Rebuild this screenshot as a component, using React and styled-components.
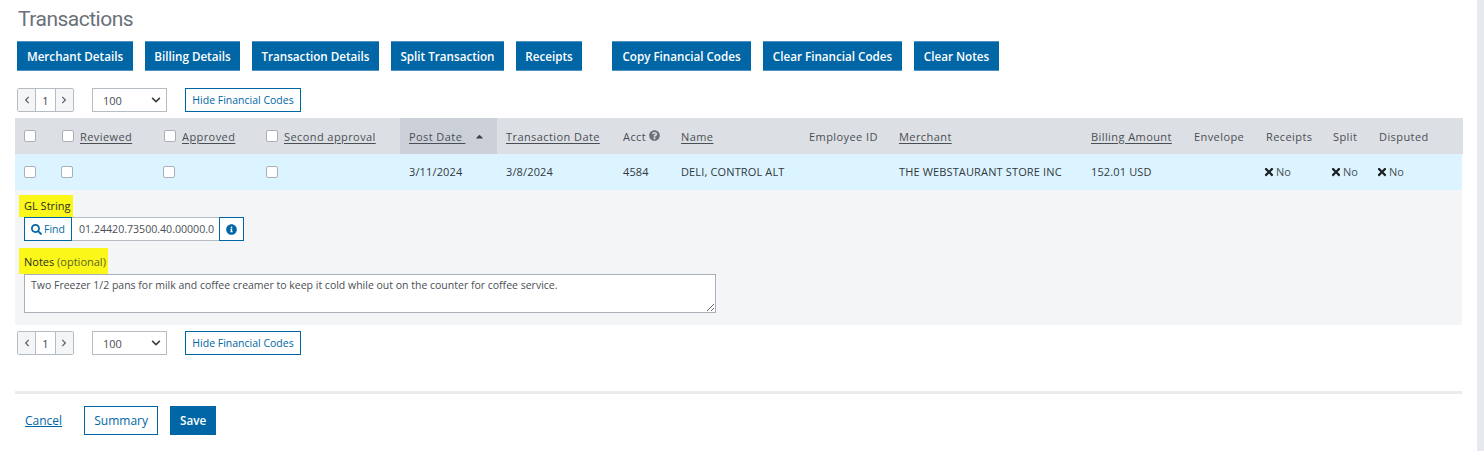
import React from "react";
import styled, { createGlobalStyle, css } from "styled-components";
import { FaCaretUp, FaChevronDown, FaChevronLeft, FaChevronRight, FaInfoCircle, FaQuestionCircle, FaSearch, FaTimes } from "react-icons/fa";

const GlobalStyle = createGlobalStyle`
  html, body {
    margin: 0;
    padding: 0;
    background: #fff;
    height: 451px;
    overflow: hidden;
  }
  body {
    font-family: "Open Sans", "Liberation Sans", sans-serif;
    font-size: 11px;
    color: #3a3f45;
  }
`;

const Page = styled.div`
  position: relative;
  width: 1484px;
  height: 451px;
  box-sizing: border-box;
  padding: 0 22px 0 15px;
`;

const Title = styled.h1`
  margin: 0;
  padding: 6px 0 0 3px;
  height: 41px;
  box-sizing: border-box;
  font-family: Roboto, sans-serif;
  font-size: 21px;
  line-height: 26px;
  font-weight: 400;
  letter-spacing: -0.5px;
  color: #6b7178;
`;

const Toolbar = styled.div`
  display: flex;
  gap: 12px;
  padding-left: 2px;
`;

const ActionGap = styled.div`
  width: 6px;
`;

const ActionButton = styled.button`
  height: 30px;
  width: ${({ $w }) => $w}px;
  padding: 0;
  border: 0;
  border-top: 1px solid #4d92c0;
  border-bottom: 1px solid #4d92c0;
  background: #0066a6;
  color: #fff;
  font-family: "Open Sans", sans-serif;
  font-size: 11.65px;
  font-weight: 600;
  white-space: nowrap;
`;

const Pager = styled.div`
  display: flex;
  align-items: center;
  padding-left: 2px;
  margin-top: ${({ $top }) => $top}px;
`;

const PagerBox = styled.div`
  display: flex;
  width: 57px;
  height: 24px;
  box-sizing: border-box;
  border: 1px solid #b5bcc3;
  border-radius: 2px;
`;

const PagerArrow = styled.div`
  width: 18px;
  display: flex;
  align-items: center;
  justify-content: center;
  background: #f4f5f7;
  color: #5b6168;
  font-size: 8px;
`;

const PagerNum = styled.div`
  width: 19px;
  display: flex;
  align-items: center;
  justify-content: center;
  border-left: 1px solid #b5bcc3;
  border-right: 1px solid #b5bcc3;
  color: #3a3f45;
  font-size: 11px;
`;

const PageSize = styled.div`
  width: 75px;
  height: 24px;
  margin-left: 18px;
  box-sizing: border-box;
  border: 1px solid #b5bcc3;
  display: flex;
  align-items: center;
  justify-content: space-between;
  padding: 0 5px 0 10px;
  font-size: 11px;
  color: #4a4f55;
  svg {
    font-size: 10px;
    color: #3a3f45;
  }
`;

const OutlineButton = styled.button`
  height: ${({ $large }) => ($large ? 29 : 24)}px;
  width: ${({ $w }) => $w}px;
  margin-left: ${({ $left }) => $left || 0}px;
  padding: 0;
  border: 1px solid #0066a6;
  background: #fff;
  color: #0066a6;
  font-family: "Open Sans", sans-serif;
  font-size: ${({ $large }) => ($large ? 12 : 10.5)}px;
`;

const Table = styled.div`
  margin-top: 6px;
  width: 1447px;
`;

const Row = styled.div`
  display: grid;
  grid-template-columns: 38px 102px 102px 143px 97px 117px 58px 128px 90px 192px 103px 72px 67px 46px 92px;
  height: 36px;
  align-items: center;
  background: ${({ $bg }) => $bg};
  margin-right: ${({ $bleed }) => ($bleed ? -1 : 0)}px;
`;

const Cell = styled.div`
  display: flex;
  align-items: center;
  height: 100%;
  padding-left: 9px;
  box-sizing: border-box;
  white-space: nowrap;
  ${({ $sorted }) =>
    $sorted &&
    css`
      background: #ccd1d9;
    `}
`;

const HeadText = styled.span`
  font-size: 11px;
  letter-spacing: 0.42px;
  white-space: pre;
  color: #4a4f55;
  ${({ $link }) =>
    $link &&
    css`
      text-decoration: underline;
      text-underline-offset: 2px;
    `}
`;

const BodyText = styled.span`
  font-size: 11px;
  letter-spacing: 0.14px;
  margin-top: -1px;
  color: #33383e;
`;

const Check = styled.span`
  display: inline-block;
  flex: none;
  width: 12px;
  height: 12px;
  box-sizing: border-box;
  background: #fff;
  border: 1px solid #a9b0b7;
  border-radius: 2px;
  margin-left: ${({ $left }) => $left || 0}px;
  margin-right: ${({ $right }) => $right || 0}px;
`;

const SortIcon = styled(FaCaretUp)`
  font-size: 11px;
  margin-left: 8px;
  color: #3a3f45;
`;

const HelpIcon = styled(FaQuestionCircle)`
  font-size: 11px;
  margin: -2px 0 0 3px;
  color: #6b7178;
`;

const NoFlag = styled.span`
  display: inline-flex;
  align-items: center;
  gap: 1px;
  margin-left: -3px;
  font-size: 11px;
  line-height: 14px;
  color: #4a4f55;
  svg {
    font-size: 12px;
    color: #1d2024;
  }
`;

const Detail = styled.div`
  height: 135px;
  background: #f4f5f7;
  box-sizing: border-box;
  padding: 5px 0 0 9px;
`;

const Marked = styled.label`
  display: block;
  width: fit-content;
  margin-left: -5px;
  padding: 0 2px 0 5px;
  height: ${({ $h }) => $h}px;
  line-height: ${({ $line }) => $line}px;
  background: #fbf719;
  font-size: 11px;
  color: #2b2e22;
`;

const Optional = styled.span`
  color: #5c6420;
`;

const CodeField = styled.div`
  display: flex;
  height: 24px;
`;

const FindButton = styled.button`
  width: 48px;
  padding: 0;
  border: 1px solid #0066a6;
  background: #fff;
  color: #0066a6;
  font-family: "Open Sans", sans-serif;
  font-size: 10.5px;
  display: flex;
  align-items: center;
  justify-content: center;
  gap: 2px;
  svg {
    font-size: 11px;
  }
`;

const CodeValue = styled.div`
  width: 147px;
  box-sizing: border-box;
  padding-left: 7px;
  background: #fff;
  border-top: 1px solid #b5bcc3;
  border-bottom: 1px solid #b5bcc3;
  line-height: 22px;
  font-size: 10.6px;
  color: #4a4f55;
  white-space: nowrap;
  overflow: hidden;
`;

const InfoButton = styled.button`
  width: 25px;
  padding: 0;
  border: 1px solid #0066a6;
  background: #fff;
  color: #0066a6;
  display: flex;
  align-items: center;
  justify-content: center;
  font-size: 11px;
`;

const NotesBlock = styled.div`
  margin-top: 7px;
`;

const NotesBox = styled.textarea`
  display: block;
  width: 692px;
  height: 39px;
  box-sizing: border-box;
  padding: 3px 6px;
  border: 1px solid #a9b0b7;
  border-radius: 0;
  outline: none;
  font-family: "Open Sans", sans-serif;
  font-size: 10.5px;
  line-height: 14px;
  color: #4a4f55;
`;

const Divider = styled.div`
  width: 1447px;
  height: 3px;
  margin-top: 36px;
  background: #e9ebed;
`;

const Footer = styled.div`
  display: flex;
  align-items: center;
  margin-top: 12px;
  padding-left: 10px;
`;

const CancelLink = styled.a`
  font-size: 12px;
  color: #0066a6;
  text-decoration: underline;
  margin-right: 22px;
`;

const SaveButton = styled.button`
  width: 46px;
  height: 29px;
  margin-left: 12px;
  padding: 0;
  border: 0;
  background: #0066a6;
  color: #fff;
  font-family: "Open Sans", sans-serif;
  font-size: 11.65px;
  font-weight: 600;
`;

const Scrollbar = styled.div`
  position: absolute;
  top: 0;
  right: 0;
  width: 7px;
  height: 451px;
  background: #e6eaee;
`;

const actions = [
  ["Merchant Details", 116],
  ["Billing Details", 95],
  ["Transaction Details", 127],
  ["Split Transaction", 113],
  ["Receipts", 66],
];

const codeActions = [
  ["Copy Financial Codes", 139],
  ["Clear Financial Codes", 139],
  ["Clear Notes", 85],
];

const Pagination = ({ top }) => (
  <Pager $top={top}>
    <PagerBox>
      <PagerArrow><FaChevronLeft /></PagerArrow>
      <PagerNum>1</PagerNum>
      <PagerArrow><FaChevronRight /></PagerArrow>
    </PagerBox>
    <PageSize>100<FaChevronDown /></PageSize>
    <OutlineButton $w={116} $left={18}>Hide Financial Codes</OutlineButton>
  </Pager>
);

export default function App() {
  return (
    <Page>
      <GlobalStyle />
      <Title>Transactions</Title>
      <Toolbar>
        {actions.map(([label, w]) => (
          <ActionButton key={label} $w={w}>{label}</ActionButton>
        ))}
        <ActionGap />
        {codeActions.map(([label, w]) => (
          <ActionButton key={label} $w={w}>{label}</ActionButton>
        ))}
      </Toolbar>
      <Pagination top={17} />
      <Table>
        <Row $bg="#dcdfe3" $bleed>
          <Cell><Check /></Cell>
          <Cell><Check $right={6} /><HeadText $link>Reviewed</HeadText></Cell>
          <Cell><Check $right={6} /><HeadText $link>Approved</HeadText></Cell>
          <Cell><Check $right={6} /><HeadText $link>Second approval</HeadText></Cell>
          <Cell $sorted><HeadText $link>Post Date </HeadText><SortIcon /></Cell>
          <Cell><HeadText $link>Transaction Date</HeadText></Cell>
          <Cell><HeadText>Acct</HeadText><HelpIcon /></Cell>
          <Cell><HeadText $link>Name</HeadText></Cell>
          <Cell><HeadText>Employee ID</HeadText></Cell>
          <Cell><HeadText $link>Merchant</HeadText></Cell>
          <Cell><HeadText $link>Billing Amount</HeadText></Cell>
          <Cell><HeadText>Envelope</HeadText></Cell>
          <Cell><HeadText>Receipts</HeadText></Cell>
          <Cell><HeadText>Split</HeadText></Cell>
          <Cell><HeadText>Disputed</HeadText></Cell>
        </Row>
        <Row $bg="#dbf4ff">
          <Cell><Check /></Cell>
          <Cell><Check $left={-1} /></Cell>
          <Cell><Check $left={-1} /></Cell>
          <Cell><Check /></Cell>
          <Cell><BodyText>3/11/2024</BodyText></Cell>
          <Cell><BodyText>3/8/2024</BodyText></Cell>
          <Cell><BodyText>4584</BodyText></Cell>
          <Cell><BodyText>DELI, CONTROL ALT</BodyText></Cell>
          <Cell />
          <Cell><BodyText>THE WEBSTAURANT STORE INC</BodyText></Cell>
          <Cell><BodyText>152.01 USD</BodyText></Cell>
          <Cell />
          <Cell><NoFlag><FaTimes />No</NoFlag></Cell>
          <Cell><NoFlag><FaTimes />No</NoFlag></Cell>
          <Cell><NoFlag><FaTimes />No</NoFlag></Cell>
        </Row>
        <Detail>
          <Marked $h={22} $line={22}>GL String</Marked>
          <CodeField>
            <FindButton><FaSearch />Find</FindButton>
            <CodeValue>01.24420.73500.40.00000.0</CodeValue>
            <InfoButton><FaInfoCircle /></InfoButton>
          </CodeField>
          <NotesBlock>
            <Marked $h={26} $line={28}>Notes <Optional>(optional)</Optional></Marked>
            <NotesBox
              readOnly
              value="Two Freezer 1/2 pans for milk and coffee creamer to keep it cold while out on the counter for coffee service."
            />
          </NotesBlock>
        </Detail>
      </Table>
      <Pagination top={6} />
      <Divider />
      <Footer>
        <CancelLink>Cancel</CancelLink>
        <OutlineButton $large $w={74}>Summary</OutlineButton>
        <SaveButton>Save</SaveButton>
      </Footer>
      <Scrollbar />
    </Page>
  );
}
